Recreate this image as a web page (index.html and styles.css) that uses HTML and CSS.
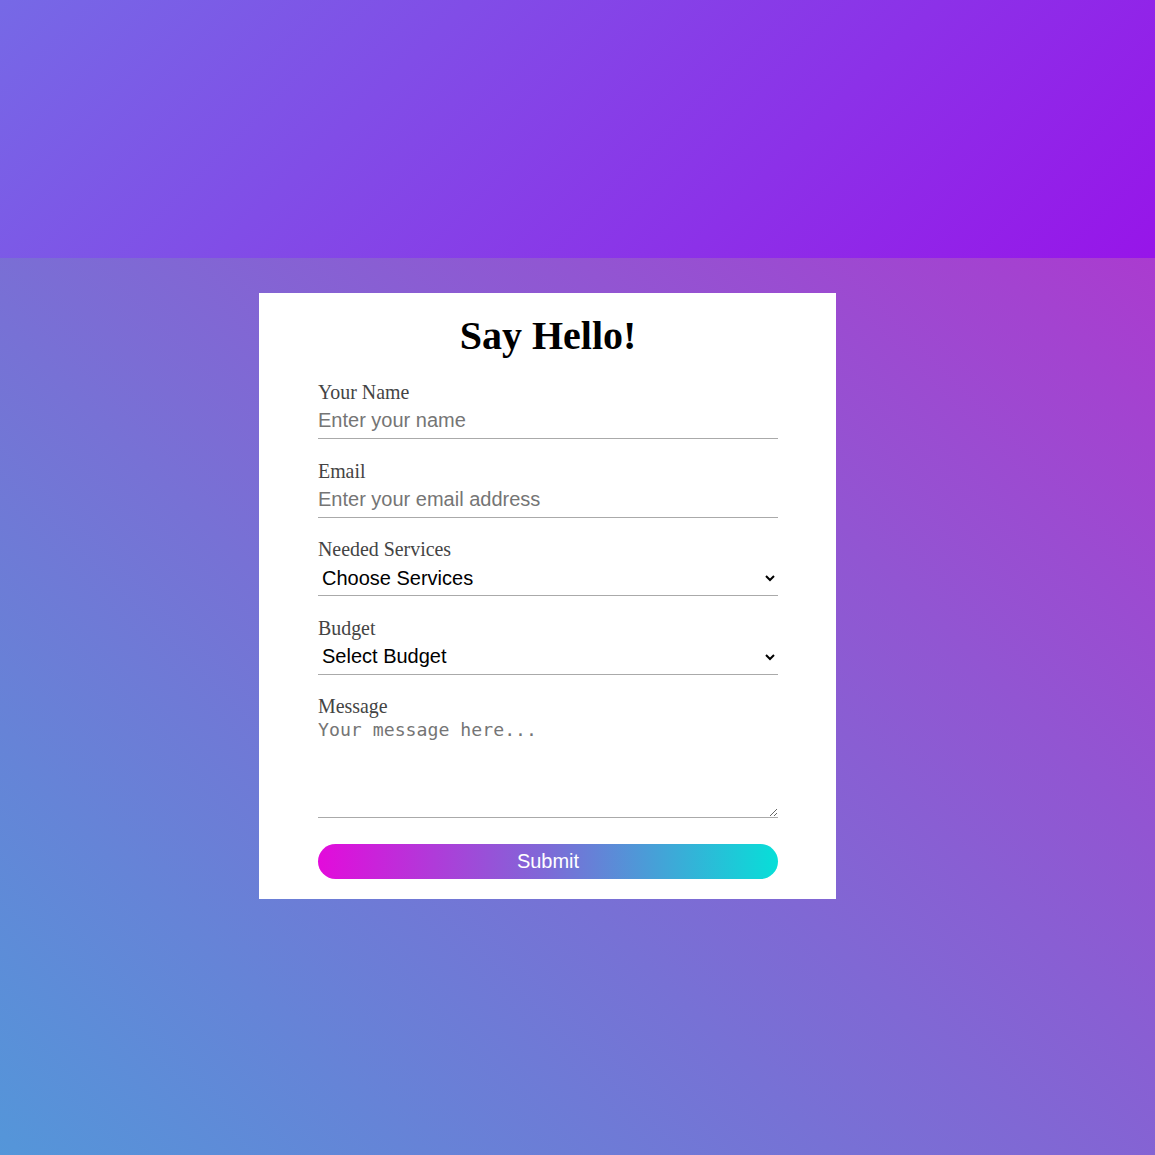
FILE: index.html
```
<!DOCTYPE html>
<html lang="en">
<head>
<meta charset="utf-8">
<title>Say Hello!</title>
<link rel="stylesheet" href="styles.css">
</head>
<body>
<header class="banner"></header>
<main class="stage">
  <form class="card">
    <h1 class="title">Say Hello!</h1>
    <div class="field">
      <label class="label" for="name">Your Name</label>
      <input class="control" id="name" type="text" placeholder="Enter your name">
    </div>
    <div class="field">
      <label class="label" for="email">Email</label>
      <input class="control" id="email" type="email" placeholder="Enter your email address">
    </div>
    <div class="field">
      <label class="label" for="services">Needed Services</label>
      <select class="control select" id="services">
        <option>Choose Services</option>
      </select>
    </div>
    <div class="field">
      <label class="label" for="budget">Budget</label>
      <select class="control select" id="budget">
        <option>Select Budget</option>
      </select>
    </div>
    <div class="field field-last">
      <label class="label" for="message">Message</label>
      <textarea class="control message" id="message" placeholder="Your message here..."></textarea>
    </div>
    <button class="submit" type="button">Submit</button>
  </form>
</main>
</body>
</html>
```
FILE: styles.css
```
html, body {
  margin: 0;
  padding: 0;
}

body {
  min-height: 1155px;
  background: linear-gradient(45deg, #5496d9 0%, #b530ce 100%);
  font-family: "Liberation Serif", "Times New Roman", serif;
}

.banner {
  height: 258px;
  background: linear-gradient(135deg, #7669e6 0%, #9715e9 100%);
}

.stage {
  padding: 35px 0 0 259px;
}

.card {
  box-sizing: border-box;
  width: 577px;
  background: #ffffff;
  padding: 20px 58px 20px 59px;
}

.title {
  margin: 0 0 22px;
  text-align: center;
  font-size: 40px;
  font-weight: bold;
  color: #000;
  line-height: 46px;
}

.field {
  margin-bottom: 20.5px;
}

.field-last {
  margin-bottom: 25.5px;
}

.label {
  display: block;
  font-size: 19.9px;
  line-height: 22px;
  color: #444;
}

.control {
  display: block;
  box-sizing: border-box;
  width: 100%;
  margin: 0;
  border: none;
  border-bottom: 1px solid #aaaaaa;
  border-radius: 0;
  background: transparent;
  outline: none;
  font-family: "Liberation Sans", Arial, sans-serif;
  font-size: 20px;
  line-height: 23px;
  padding: 6px 0;
  color: #000;
}

.control::placeholder {
  color: #757575;
  opacity: 1;
}

.select {
  height: 36px;
  padding: 5px 0 5px 0;
}

.message {
  height: 101px;
  padding: 2px 0;
  font-family: "DejaVu Sans Mono", "Liberation Mono", monospace;
  font-size: 18.2px;
  line-height: 21px;
  resize: vertical;
}

.submit {
  display: block;
  box-sizing: border-box;
  width: 100%;
  height: 35px;
  border: none;
  border-radius: 18px;
  background: linear-gradient(to right, #e30bdb 0%, #7d6ad7 50%, #07dfd8 100%);
  color: #ffffff;
  font-family: "Liberation Sans", Arial, sans-serif;
  font-size: 20px;
  line-height: 23px;
  padding: 6px 0;
  cursor: pointer;
}
```
